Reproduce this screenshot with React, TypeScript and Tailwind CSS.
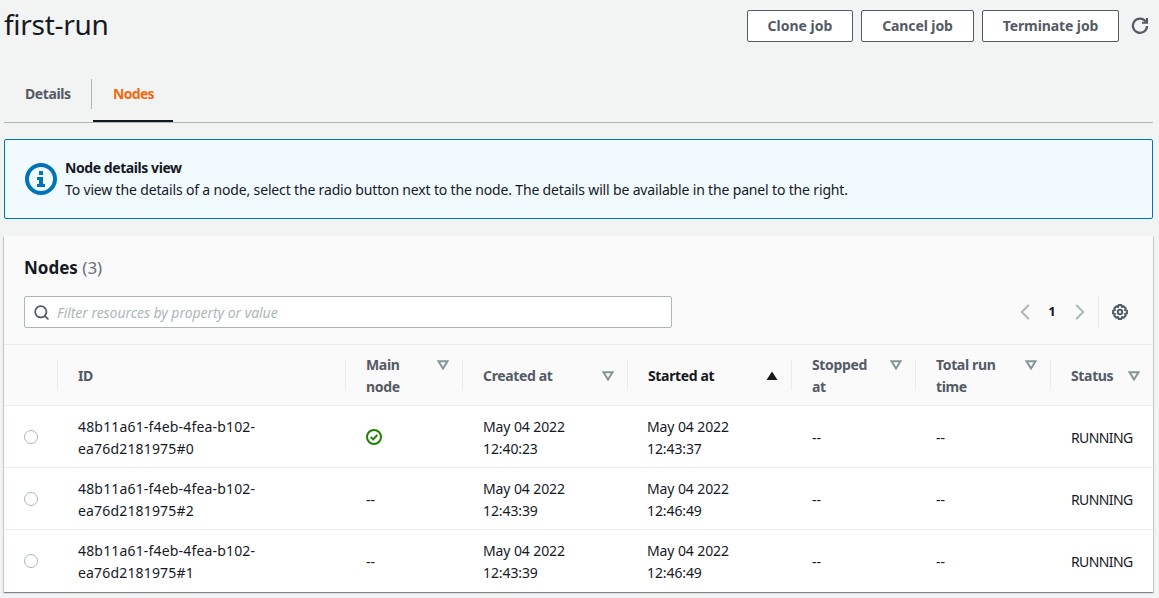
import { Search, ChevronLeft, ChevronRight } from 'lucide-react'

const font = "font-['Noto_Sans',sans-serif]"
const cols = 'grid grid-cols-[53px_288px_117px_165px_164px_124px_135px_1fr]'

const rows = [
  { id: '48b11a61-f4eb-4fea-b102-ea76d2181975#0', main: true, created: '12:40:23', started: '12:43:37' },
  { id: '48b11a61-f4eb-4fea-b102-ea76d2181975#2', main: false, created: '12:43:39', started: '12:46:49' },
  { id: '48b11a61-f4eb-4fea-b102-ea76d2181975#1', main: false, created: '12:43:39', started: '12:46:49' },
]

function Caret({ solid, className }: { solid?: boolean; className?: string }) {
  if (solid) {
    return (
      <svg viewBox="0 0 12 10" className={`w-3 h-2.5 ${className ?? ''}`}>
        <path d="M6 0.5 L11.5 9 H0.5 Z" fill="#16191f" />
      </svg>
    )
  }
  return (
    <svg viewBox="0 0 12 10" className={`w-3 h-2.5 ${className ?? ''}`}>
      <path d="M1.5 1.2 H10.5 L6 8.5 Z" fill="none" stroke="#879596" strokeWidth="2" />
    </svg>
  )
}

function HeaderCell({ label, caret = true, active, top, wrapClass }: { label: string; caret?: boolean; active?: boolean; top?: boolean; wrapClass?: string }) {
  return (
    <div className="relative flex items-center h-[60px] pl-[21px] pr-3 pt-0.5">
      <span className="absolute left-0 top-[15px] h-[30px] w-px bg-[#eaeded]" />
      <span className={`leading-[22px] font-bold text-[14px] tracking-[-0.35px] ${active ? 'text-[#16191f]' : 'text-[#545b64]'} ${wrapClass ?? ''}`}>{label}</span>
      {caret && !active && <Caret className={`absolute right-[13px] ${top ? 'top-[15px]' : 'top-[26px]'}`} />}
      {active && <Caret solid className="absolute right-[13px] top-[26px]" />}
    </div>
  )
}

export default function App() {
  return (
    <div className={`${font} w-[1159px] h-[598px] overflow-hidden bg-[#f2f3f3] text-[#16191f] text-[14px] pl-1 pr-1.5`}>
      {/* Page header */}
      <div className="flex items-start justify-between h-[79px]">
        <h1 className="text-[28px] leading-[48px] font-normal tracking-[-0.3px]">first-run</h1>
        <div className="flex items-center gap-2 pt-2.5">
          <button className="h-[32px] w-[106px] pb-0.5 rounded-[2px] border border-[#545b64] bg-white text-[#545b64] font-bold text-[14px]">Clone job</button>
          <button className="h-[32px] w-[113px] pb-0.5 rounded-[2px] border border-[#545b64] bg-white text-[#545b64] font-bold text-[14px] tracking-[-0.1px]">Cancel job</button>
          <button className="h-[32px] w-[137px] pb-0.5 rounded-[2px] border border-[#545b64] bg-white text-[#545b64] font-bold text-[14px] tracking-[-0.1px]">Terminate job</button>
          <svg viewBox="0 0 16 16" className="w-[18px] h-[18px] ml-[4px] mr-[4px]" fill="none" stroke="#545b64" strokeWidth="2">
            <path d="M13.2 4.2 A6.3 6.3 0 1 0 14.3 8" />
            <path d="M14.2 0.8 V5.2 H9.8" strokeWidth="1.8" />
          </svg>
        </div>
      </div>

      {/* Tabs */}
      <div className="flex h-[44px] border-b border-[#aab7b8] font-bold text-[14px] tracking-[-0.4px]">
        <div className="flex items-start pl-[21px] pr-[20px] border-r border-[#aab7b8] w-[88px] h-[30px] leading-[30px] text-[#545b64]">Details</div>
        <div className="relative ml-px pl-5 h-[43px] leading-[30px] text-[#f5690f] w-[80px] tracking-[-0.7px]">
          Nodes
          <span className="absolute left-0 right-0 top-[41px] h-0.5 bg-[#16191f]" />
        </div>
      </div>

      {/* Info alert */}
      <div className="mt-4 h-[80px] flex items-center border border-[#0073bb] bg-[#f1faff] rounded-[2px] pl-[20px]">
        <svg viewBox="0 0 32 32" className="w-8 h-8 shrink-0">
          <circle cx="16" cy="16" r="14" fill="none" stroke="#0073bb" strokeWidth="4" />
          <rect x="14" y="8" width="4" height="4" fill="#0073bb" />
          <path d="M12 14 H18 V21 H20 V24 H12 V21 H14 V17 H12 Z" fill="#0073bb" />
        </svg>
        <div className="ml-2 leading-[22px] text-[14px]">
          <div className="font-bold text-[#16191f] tracking-[-0.43px]">Node details view</div>
          <div className="tracking-[-0.16px]">To view the details of a node, select the radio button next to the node. The details will be available in the panel to the right.</div>
        </div>
      </div>

      {/* Nodes table */}
      <div className="mt-[17px] bg-white shadow-[0_1px_1px_0_rgba(0,28,36,0.3),1px_1px_1px_0_rgba(0,28,36,0.15),-1px_1px_1px_0_rgba(0,28,36,0.15)]">
        <div className="bg-[#fafafa] h-[109px] px-5 pt-5 border-b border-[#eaeded]">
          <div className="text-[17px] leading-[24px] font-bold">
            Nodes <span className="font-normal text-[#687078]">(3)</span>
          </div>
          <div className="flex items-center justify-between mt-[16px]">
            <div className="flex items-center w-[648px] h-[32px] bg-white border border-[#aab7b8] rounded-[2px] pl-2">
              <Search className="w-[17px] h-[17px] text-[#545b64]" strokeWidth={2.5} />
              <span className="ml-[7px] italic text-[#aab7b8] text-[14px] tracking-[-0.05px]">Filter resources by property or value</span>
            </div>
            <div className="flex items-center">
              <ChevronLeft className="w-[26px] h-[26px] text-[#aab7b8]" strokeWidth={1.75} />
              <span className="w-[28px] text-center font-bold text-[13px]">1</span>
              <ChevronRight className="ml-px w-[26px] h-[26px] text-[#aab7b8]" strokeWidth={1.75} />
              <span className="ml-[5px] mr-[13px] h-8 w-px bg-[#eaeded]" />
              <svg viewBox="0 0 16 16" className="w-4 h-4 mr-[5px]" fill="none" stroke="#545b64" strokeWidth="2">
                <circle cx="8" cy="8" r="2.2" />
                <path d="M6.6 1 H9.4 L9.9 3 L11.6 2.2 L13.8 4.4 L13 6.1 L15 6.6 V9.4 L13 9.9 L13.8 11.6 L11.6 13.8 L9.9 13 L9.4 15 H6.6 L6.1 13 L4.4 13.8 L2.2 11.6 L3 9.9 L1 9.4 V6.6 L3 6.1 L2.2 4.4 L4.4 2.2 L6.1 3 Z" strokeLinejoin="round" />
              </svg>
            </div>
          </div>
        </div>

        <div className={`${cols} bg-[#fafafa] border-b border-[#eaeded]`}>
          <div />
          <HeaderCell label="ID" caret={false} />
          <HeaderCell label="Main node" top wrapClass="w-[40px]" />
          <HeaderCell label="Created at" />
          <HeaderCell label="Started at" active />
          <HeaderCell label="Stopped at" top wrapClass="w-[60px]" />
          <HeaderCell label="Total run time" top wrapClass="w-[70px]" />
          <HeaderCell label="Status" />
        </div>

        {rows.map((r, i) => (
          <div key={r.id} className={`${cols} h-[62px] items-center leading-[22px] text-[14px] ${i < 2 ? 'border-b border-[#eaeded]' : ''}`}>
            <div className="pl-5">
              <span className="block w-3.5 h-3.5 rounded-full border border-[#aab7b8] bg-white" />
            </div>
            <div className="pl-[21px] pt-0.5 w-[230px] box-content tracking-[0.17px]">{r.id}</div>
            <div className="pl-[21px] pt-0.5">
              {r.main ? (
                <svg viewBox="0 0 16 16" className="w-4 h-4 -mt-0.5" fill="none" stroke="#1d8102" strokeWidth="2">
                  <circle cx="8" cy="8" r="7" />
                  <path d="M4.8 8 L7.2 10.4 L11.2 6" />
                </svg>
              ) : '--'}
            </div>
            <div className="pl-[21px] pt-0.5 tracking-[-0.1px]">May 04 2022<br />{r.created}</div>
            <div className="pl-[20px] pt-0.5 tracking-[-0.1px]">May 04 2022<br />{r.started}</div>
            <div className="pl-[21px] pt-0.5">--</div>
            <div className="pl-[21px] pt-0.5">--</div>
            <div className="pl-[21px] pt-0.5 tracking-[-0.6px]">RUNNING</div>
          </div>
        ))}
      </div>
    </div>
  )
}
